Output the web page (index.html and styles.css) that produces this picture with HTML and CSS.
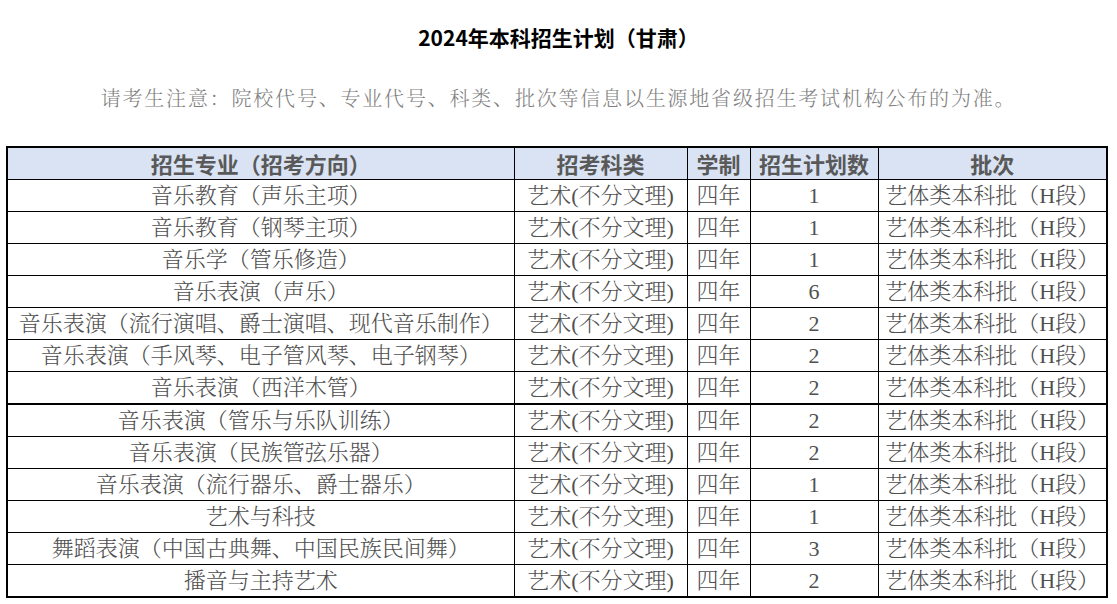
FILE: index.html
```html
<!DOCTYPE html>
<html lang="zh-CN">
<head>
<meta charset="utf-8">
<title>2024年本科招生计划（甘肃）</title>
<link rel="stylesheet" href="styles.css">
</head>
<body>
<div class="page">
  <h1 class="title">2024年本科招生计划（甘肃）</h1>
  <p class="notice">请考生注意：院校代号、专业代号、科类、批次等信息以生源地省级招生考试机构公布的为准。</p>
  <table class="plan">
    <colgroup>
      <col class="c1"><col class="c2"><col class="c3"><col class="c4"><col class="c5">
    </colgroup>
    <thead>
      <tr><th>招生专业（招考方向）</th><th>招考科类</th><th>学制</th><th>招生计划数</th><th>批次</th></tr>
    </thead>
    <tbody>
      <tr><td>音乐教育（声乐主项）</td><td>艺术(不分文理)</td><td>四年</td><td>1</td><td>艺体类本科批（H段）</td></tr>
      <tr><td>音乐教育（钢琴主项）</td><td>艺术(不分文理)</td><td>四年</td><td>1</td><td>艺体类本科批（H段）</td></tr>
      <tr><td>音乐学（管乐修造）</td><td>艺术(不分文理)</td><td>四年</td><td>1</td><td>艺体类本科批（H段）</td></tr>
      <tr><td>音乐表演（声乐）</td><td>艺术(不分文理)</td><td>四年</td><td>6</td><td>艺体类本科批（H段）</td></tr>
      <tr><td>音乐表演（流行演唱、爵士演唱、现代音乐制作）</td><td>艺术(不分文理)</td><td>四年</td><td>2</td><td>艺体类本科批（H段）</td></tr>
      <tr><td>音乐表演（手风琴、电子管风琴、电子钢琴）</td><td>艺术(不分文理)</td><td>四年</td><td>2</td><td>艺体类本科批（H段）</td></tr>
      <tr class="split"><td>音乐表演（西洋木管）</td><td>艺术(不分文理)</td><td>四年</td><td>2</td><td>艺体类本科批（H段）</td></tr>
      <tr><td>音乐表演（管乐与乐队训练）</td><td>艺术(不分文理)</td><td>四年</td><td>2</td><td>艺体类本科批（H段）</td></tr>
      <tr><td>音乐表演（民族管弦乐器）</td><td>艺术(不分文理)</td><td>四年</td><td>2</td><td>艺体类本科批（H段）</td></tr>
      <tr><td>音乐表演（流行器乐、爵士器乐）</td><td>艺术(不分文理)</td><td>四年</td><td>1</td><td>艺体类本科批（H段）</td></tr>
      <tr><td>艺术与科技</td><td>艺术(不分文理)</td><td>四年</td><td>1</td><td>艺体类本科批（H段）</td></tr>
      <tr><td>舞蹈表演（中国古典舞、中国民族民间舞）</td><td>艺术(不分文理)</td><td>四年</td><td>3</td><td>艺体类本科批（H段）</td></tr>
      <tr><td>播音与主持艺术</td><td>艺术(不分文理)</td><td>四年</td><td>2</td><td>艺体类本科批（H段）</td></tr>
    </tbody>
  </table>
</div>
</body>
</html>
```
FILE: styles.css
```css
html, body {
  margin: 0;
  padding: 0;
  background: #ffffff;
}

.page {
  width: 1117px;
  padding-top: 24px;
}

.title {
  margin: 0;
  text-align: center;
  font-family: "Noto Sans CJK SC", "Liberation Sans", sans-serif;
  font-weight: 700;
  font-size: 21px;
  line-height: 26px;
  color: #000000;
}

.notice {
  margin: 34px 0 0 0;
  text-align: center;
  font-family: "Liberation Serif", "Noto Serif CJK SC", "Noto Sans CJK SC", serif;
  font-weight: 300;
  font-size: 20px;
  letter-spacing: 1.8px;
  line-height: 30px;
  color: #7f7f7f;
}

.plan {
  margin: 32px 0 0 6px;
  width: 1102px;
  table-layout: fixed;
  border-collapse: collapse;
  border: 2px solid #000000;
}

.c1 { width: 507px; }
.c2 { width: 173px; }
.c3 { width: 63px; }
.c4 { width: 128px; }
.c5 { width: 229px; }

.plan th,
.plan td {
  border: 1px solid #000000;
  padding: 0;
  height: 31px;
  line-height: 31px;
  text-align: center;
  white-space: nowrap;
  overflow: hidden;
}

.plan th {
  background: #dae3f3;
  font-family: "Noto Sans CJK SC", "Liberation Sans", sans-serif;
  font-weight: 700;
  font-size: 22px;
  color: #595959;
}

.plan td {
  font-family: "Liberation Serif", "Noto Serif CJK SC", "Noto Sans CJK SC", serif;
  font-weight: 300;
  font-size: 22px;
  color: #505050;
}

.plan tr.split td {
  border-bottom-width: 2px;
}
```
